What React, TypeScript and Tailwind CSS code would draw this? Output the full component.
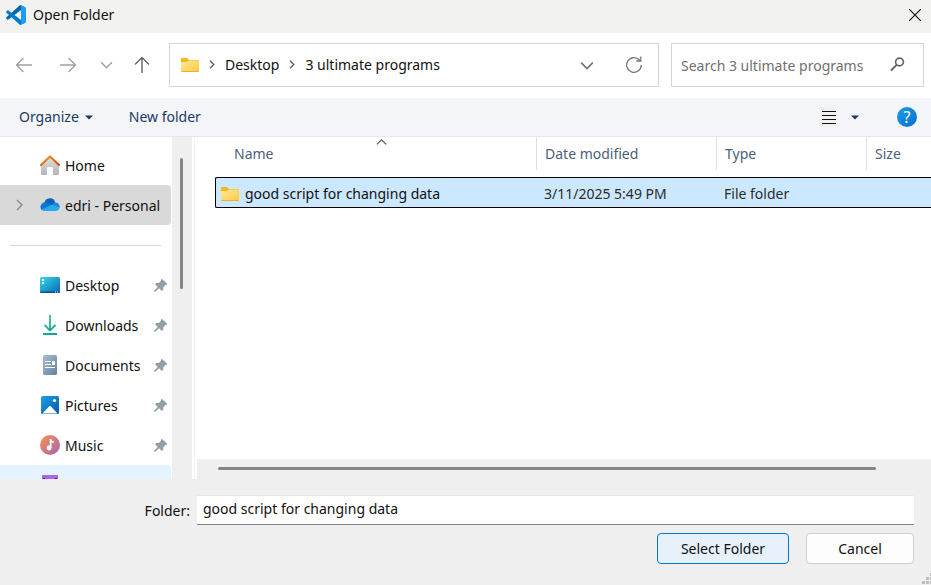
import type { ReactNode } from 'react';

function FolderIcon() {
  return (
    <svg width="18" height="14" viewBox="0 0 18 14" className="shrink-0" aria-hidden="true">
      <defs>
        <linearGradient id="folderFront" x1="0" y1="0" x2="1" y2="1">
          <stop offset="0" stopColor="#ffe9a2" />
          <stop offset="1" stopColor="#ffc83a" />
        </linearGradient>
      </defs>
      <path d="M0 1Q0 0 1 0H6L8 2H17Q18 2 18 3V12H0Z" fill="#f8b61c" />
      <path d="M0 4H6L8 2.5H17.5Q18 2.5 18 3V13Q18 14 17 14H1Q0 14 0 13Z" fill="url(#folderFront)" />
      <path d="M0.5 13.5H17.5" stroke="#eeb02c" strokeWidth="1" />
    </svg>
  );
}

function VsCodeLogo() {
  return (
    <svg width="20" height="20" viewBox="0 0 100 100" aria-hidden="true">
      <path d="M96 11 75 1Q71 -1 68 3L1 63Q-1 65 1 68L7 73Q9 75 12 73L92 12Q100 6 100 18Q100 13 96 11Z" fill="#0065a9" />
      <path d="M96 89 75 99Q71 101 68 97L1 37Q-1 35 1 32L7 27Q9 25 12 27L92 88Q100 94 100 82Q100 87 96 89Z" fill="#007acc" />
      <path d="M75 99Q71 101 68 97Q75 101 75 92V8Q75 -1 68 3Q71 -1 75 1L96 11Q100 13 100 18V82Q100 87 96 89Z" fill="#1f9cf0" />
    </svg>
  );
}

function HomeIcon() {
  return (
    <svg width="20" height="20" viewBox="0 0 20 20" aria-hidden="true">
      <defs>
        <linearGradient id="homeWall" x1="0" y1="0" x2="0" y2="1">
          <stop offset="0" stopColor="#e3e3e3" />
          <stop offset="1" stopColor="#b3b3b3" />
        </linearGradient>
        <linearGradient id="homeRoof" x1="0" y1="0" x2="1" y2="1">
          <stop offset="0" stopColor="#f59a1b" />
          <stop offset="1" stopColor="#d64a10" />
        </linearGradient>
      </defs>
      <path d="M1 9 10 1.5 19 9V18.5Q19 20 17.5 20H13V13Q13 12 12 12H8Q7 12 7 13V20H2.500Q1 20 1 18.500Z" fill="url(#homeWall)" />
      <path d="M1 10 10 1.500 19 10" fill="none" stroke="url(#homeRoof)" strokeWidth="2.200" strokeLinecap="round" strokeLinejoin="round" />
    </svg>
  );
}

function CloudIcon() {
  return (
    <svg width="20" height="14" viewBox="0 0 20 14" aria-hidden="true">
      <path d="M4.500 5A5.500 5.500 0 0 1 15.300 4.500L10 9 4 7Z" fill="#0a63bb" />
      <path d="M5 4A5 5 0 0 0 1.500 12L12 7.500 8 5Q6.500 4 5 4Z" fill="#0b78d4" />
      <path d="M11 7 14 5Q15 4.500 16 4.600A4.300 4.300 0 0 1 19.600 10Z" fill="#168ae0" />
      <path d="M1.500 12 11 7 19.600 10Q18.500 13 15.500 13H5Q2.500 13 1.500 12Z" fill="#29a8ec" />
    </svg>
  );
}

function DesktopIcon() {
  return (
    <svg width="20" height="16" viewBox="0 0 20 16" aria-hidden="true">
      <defs>
        <linearGradient id="desktopFill" x1="0" y1="0" x2="1" y2="1">
          <stop offset="0" stopColor="#36dbe8" />
          <stop offset="1" stopColor="#0b63b8" />
        </linearGradient>
      </defs>
      <rect width="20" height="16" rx="1.500" fill="url(#desktopFill)" />
      <path d="M2 2h2v2H2zM2 5h2v2H2z" fill="#fff" />
      <path d="M0 14.500H20Q20 16 18.500 16H1.500Q0 16 0 14.500Z" fill="#07558f" />
      <path d="M15 15h1M17 15h1" stroke="#fff" strokeWidth="1" />
    </svg>
  );
}

function DownloadIcon() {
  return (
    <svg width="20" height="20" viewBox="0 0 20 20" aria-hidden="true">
      <defs>
        <linearGradient id="downFill" gradientUnits="userSpaceOnUse" x1="4" y1="0" x2="16" y2="20">
          <stop offset="0" stopColor="#35c68a" />
          <stop offset="1" stopColor="#0b9f98" />
        </linearGradient>
      </defs>
      <path d="M10 0V15M4.500 10 10 15.500 15.500 10M3 19H17" fill="none" stroke="url(#downFill)" strokeWidth="1.800" />
    </svg>
  );
}

function DocumentIcon() {
  return (
    <svg width="20" height="20" viewBox="0 0 20 20" aria-hidden="true">
      <defs>
        <linearGradient id="docFill" x1="0" y1="0" x2="1" y2="1">
          <stop offset="0" stopColor="#a9bfd3" />
          <stop offset="1" stopColor="#64809f" />
        </linearGradient>
      </defs>
      <rect x="3" width="14" height="20" rx="1.500" fill="url(#docFill)" />
      <path d="M5 6.500H11M5 9.500H11M5 12.500H15" stroke="#fff" strokeWidth="1.200" />
      <rect x="12" y="6" width="3" height="4" fill="#fff" />
    </svg>
  );
}

function PictureIcon() {
  return (
    <svg width="20" height="18" viewBox="0 0 20 18" aria-hidden="true">
      <defs>
        <linearGradient id="picFill" x1="0" y1="0" x2="1" y2="1">
          <stop offset="0" stopColor="#1fa0e8" />
          <stop offset="1" stopColor="#0558a8" />
        </linearGradient>
      </defs>
      <rect x="1" width="18" height="18" rx="1.500" fill="url(#picFill)" />
      <path d="M2.500 17.500 9 10.500Q10 9.500 11 10.500L17.500 17.500Z" fill="#fff" />
      <circle cx="14.500" cy="4.500" r="1.600" fill="#fff" />
    </svg>
  );
}

function MusicIcon() {
  return (
    <svg width="20" height="20" viewBox="0 0 20 20" aria-hidden="true">
      <defs>
        <linearGradient id="musicFill" x1="0" y1="0" x2="1" y2="1">
          <stop offset="0.100" stopColor="#f28f55" />
          <stop offset="0.950" stopColor="#a965ae" />
        </linearGradient>
      </defs>
      <circle cx="10" cy="10" r="10" fill="url(#musicFill)" />
      <circle cx="9" cy="13" r="2.400" fill="#fff" />
      <path d="M10.600 13V4Q11 7 13.800 7.200" fill="none" stroke="#fff" strokeWidth="1.800" />
    </svg>
  );
}

function VideoIcon() {
  return (
    <svg width="20" height="20" viewBox="0 0 20 20" aria-hidden="true">
      <rect x="2" width="16" height="18" rx="1" fill="#a866ea" />
      <path d="M3 3h2v2H3zM15 3h2v2h-2z" fill="#4b2478" />
    </svg>
  );
}

function PinIcon() {
  return (
    <svg width="13" height="13" viewBox="0 0 13 13" className="shrink-0" aria-hidden="true">
      <path d="M8 0 13 4.500V5.500L11.500 6 9.200 8.600V11L8 12 5 9.300 1.200 12.800 0 12.800V11.800L3.700 8 1 5.200 2 4H4.800L7 1.800V0.500Z" fill="#949ea5" />
    </svg>
  );
}

function Chevron({ dir, size, color, weight }: { dir: 'up' | 'down' | 'right'; size: number; color: string; weight: number }) {
  const d = { up: 'M1 8 6 3 11 8', down: 'M1 4 6 9 11 4', right: 'M4 1 9 6 4 11' }[dir];
  return (
    <svg width={size} height={size} viewBox="0 0 12 12" fill="none" stroke={color} strokeWidth={weight} aria-hidden="true">
      <path d={d} />
    </svg>
  );
}

function Arrow({ d, color }: { d: string; color: string }) {
  return (
    <svg width="16" height="16" viewBox="0 0 16 16" fill="none" stroke={color} strokeWidth="1.400" strokeLinecap="round" strokeLinejoin="round" aria-hidden="true">
      <path d={d} />
    </svg>
  );
}

function Caret() {
  return (
    <svg width="8" height="5" viewBox="0 0 8 5" aria-hidden="true">
      <path d="M0 0.500H8L4 4.500Z" fill="#1b3a63" />
    </svg>
  );
}

function SideItem({ icon, label, pinned, tone = '', chevron }: { icon: ReactNode; label: string; pinned?: boolean; tone?: string; chevron?: boolean }) {
  return (
    <li>
      <button type="button" className={`flex h-10 w-full items-center rounded-r-sm pr-1 pl-3 text-left ${tone}`}>
        <span className="flex w-7 shrink-0 pl-px">{chevron && <Chevron dir="right" size={12} color="#858585" weight={1.3} />}</span>
        <span className="mr-[5px] flex w-5 shrink-0 justify-center">{icon}</span>
        <span className="flex-1 pt-0.5 whitespace-nowrap">{label}</span>
        {pinned && <PinIcon />}
      </button>
    </li>
  );
}

function HeaderCell({ label, last, sorted }: { label: string; last?: boolean; sorted?: boolean }) {
  return (
    <th scope="col" aria-sort={sorted ? 'ascending' : undefined} className="h-10 p-0 text-left align-top font-normal">
      <div className={`relative flex h-[33px] items-center text-[#4c607a] ${sorted ? 'pl-[19px]' : 'pl-2'} ${last ? '' : 'border-r border-[#e2e2e2]'}`}>
        {label}
        {sorted && (
          <span className="absolute top-0 left-[161px]">
            <Chevron dir="up" size={11} color="#555555" weight={1.2} />
          </span>
        )}
      </div>
    </th>
  );
}

export default function App() {
  return (
    <div className="relative flex h-screen flex-col overflow-hidden bg-[#efefef] font-['Noto_Sans','Open_Sans',sans-serif] text-[14px] leading-5 text-[#111111]">
      <header className="flex h-[33px] shrink-0 items-center bg-[#f2f2f1] pr-2.5 pb-1 pl-1.5">
        <VsCodeLogo />
        <h1 className="ml-[7px] flex-1">Open Folder</h1>
        <button type="button" aria-label="Close">
          <svg width="12" height="12" viewBox="0 0 12 12" stroke="#111111" strokeWidth="1.200" aria-hidden="true">
            <path d="M0 0 12 12M12 0 0 12" />
          </svg>
        </button>
      </header>

      <nav aria-label="Location" className="flex h-[65px] shrink-0 items-center bg-white pr-[7px] pb-0.5 pl-4">
        <div className="flex w-[153px] shrink-0 items-center">
          <button type="button" aria-label="Back" className="mr-7"><Arrow d="M15.500 8H0.500M7 1.500 0.500 8 7 14.500" color="#a0a0a0" /></button>
          <button type="button" aria-label="Forward" className="mr-6"><Arrow d="M0.500 8H15.500M9 1.500 15.500 8 9 14.500" color="#a0a0a0" /></button>
          <button type="button" aria-label="Recent locations" className="mr-[21px]"><Chevron dir="down" size={13} color="#a0a0a0" weight={1.4} /></button>
          <button type="button" aria-label="Up"><Arrow d="M8 15.500V0.500M1.500 7 8 0.500 14.500 7" color="#606060" /></button>
        </div>
        <div className="flex h-11 min-w-0 flex-1 items-center border border-[#d5d5d5] pr-4 pl-[11px]">
          <FolderIcon />
          <span className="mr-[9px] ml-2"><Chevron dir="right" size={9} color="#606060" weight={1.8} /></span>
          <button type="button">Desktop</button>
          <span className="mr-[9px] ml-2"><Chevron dir="right" size={9} color="#606060" weight={1.8} /></span>
          <button type="button" className="whitespace-nowrap">3 ultimate programs</button>
          <span className="flex-1" />
          <button type="button" aria-label="Previous locations" className="mr-8"><Chevron dir="down" size={14} color="#707070" weight={1.4} /></button>
          <button type="button" aria-label="Refresh">
            <svg width="16" height="17" viewBox="0 0 16 17" fill="none" stroke="#777777" strokeWidth="1.300" aria-hidden="true">
              <path d="M15.300 9A7.300 7.300 0 1 1 13.500 4.200M14.800 0.500V5H10.300" />
            </svg>
          </button>
        </div>
        <div className="ml-3 flex h-11 w-[253px] shrink-0 items-center border border-[#d5d5d5] pr-[18px] pl-[9px]">
          <input type="search" aria-label="Search 3 ultimate programs" placeholder="Search 3 ultimate programs" className="min-w-0 flex-1 pt-0.5 outline-none placeholder:text-[#707070]" />
          <svg width="15" height="15" viewBox="0 0 15 15" fill="none" stroke="#666666" aria-hidden="true">
            <circle cx="9.500" cy="5" r="3.900" strokeWidth="1.700" />
            <path d="M6.600 7.900 1 13.500" strokeWidth="2" />
          </svg>
        </div>
      </nav>

      <div role="toolbar" aria-label="Commands" className="flex h-[39px] shrink-0 items-center border-b border-[#e5e7ea] bg-[#f4f5f8] pr-3.5 pl-[19px] text-[#1b3a63]">
        <button type="button" className="mr-9 flex items-center gap-1.5">Organize<Caret /></button>
        <button type="button">New folder</button>
        <span className="flex-1" />
        <button type="button" aria-label="Change view" className="flex h-5 w-5 items-center justify-center bg-[#f1f1f1]">
          <svg width="14" height="13" viewBox="0 0 14 13" stroke="#111111" aria-hidden="true">
            <path d="M0 0.500H14M0 4.500H14M0 8.500H14M0 12.500H14" />
          </svg>
        </button>
        <button type="button" aria-label="More view options" className="mr-[38px] ml-3"><Caret /></button>
        <button type="button" aria-label="Help" className="flex h-5 w-5 items-center justify-center rounded-full bg-linear-to-br from-[#1c9be6] to-[#0a6fd0] text-[16px] text-white">?</button>
      </div>

      <main className="flex min-h-0 flex-1 bg-white">
        <aside className="flex w-48 shrink-0 overflow-hidden">
          <ul className="min-w-0 flex-1 pt-2 pr-px">
            <SideItem icon={<HomeIcon />} label="Home" />
            <SideItem icon={<CloudIcon />} label="edri - Personal" tone="bg-[#d9d9d9]" chevron />
            <li role="separator" className="mr-2.5 ml-2.5 flex h-10 items-center"><span className="h-px w-full bg-[#d5d5d5]" /></li>
            <SideItem icon={<DesktopIcon />} label="Desktop" pinned />
            <SideItem icon={<DownloadIcon />} label="Downloads" pinned />
            <SideItem icon={<DocumentIcon />} label="Documents" pinned />
            <SideItem icon={<PictureIcon />} label="Pictures" pinned />
            <SideItem icon={<MusicIcon />} label="Music" pinned />
            <SideItem icon={<VideoIcon />} label="" tone="bg-[#e5f3ff]" />
          </ul>
          <div className="w-5 shrink-0 bg-[#efefef] pt-[21px] pl-2">
            <div className="h-[131px] w-[3px] rounded-full bg-[#858585]" />
          </div>
        </aside>
        <section aria-label="Files" className="ml-0.5 flex min-w-0 flex-1 flex-col border-l border-[#f2f2f2] pl-0.5">
          <div className="min-h-0 flex-1 overflow-hidden pl-[18px]">
            <table className="w-full table-fixed border-separate border-spacing-0">
              <colgroup>
                <col />
                <col className="w-[180px]" />
                <col className="w-[150px]" />
                <col className="w-16" />
              </colgroup>
              <thead>
                <tr>
                  <HeaderCell label="Name" sorted />
                  <HeaderCell label="Date modified" />
                  <HeaderCell label="Type" />
                  <HeaderCell label="Size" last />
                </tr>
              </thead>
              <tbody>
                <tr className="bg-[#cce8ff] text-[#2b2b2b]">
                  <td className="h-[31px] rounded-l-xs border-y border-l border-black px-0 pt-0.5 pb-0 pl-[5px] text-[#111111]">
                    <div className="flex items-center gap-1.5"><FolderIcon />good script for changing data</div>
                  </td>
                  <td className="border-y border-black pt-0.5 pr-0 pb-0 pl-[7px]">3/11/2025 5:49 PM</td>
                  <td className="border-y border-black pt-0.5 pr-0 pb-0 pl-[7px]">File folder</td>
                  <td className="border-y border-black p-0" />
                </tr>
              </tbody>
            </table>
          </div>
          <div className="flex h-5 shrink-0 items-center bg-[#efefef] pr-[55px] pb-px pl-[21px]">
            <div className="h-[3px] flex-1 rounded-full bg-[#858585]" />
          </div>
        </section>
      </main>

      <footer className="flex h-[106px] shrink-0">
        <form className="flex flex-1 flex-col gap-2 pt-4 pr-[17px]" onSubmit={(event) => event.preventDefault()}>
          <div className="flex items-center">
            <label htmlFor="folder" className="w-[197px] shrink-0 pt-0.5 pr-[7px] text-right">Folder:</label>
            <input id="folder" type="text" defaultValue="good script for changing data" className="h-[30px] min-w-0 flex-1 border-t border-b border-t-[#e8e8e8] border-b-[#858585] bg-white px-1.5 pb-1 outline-none" />
          </div>
          <div className="flex justify-end gap-[17px]">
            <button type="submit" className="h-[31px] w-[132px] rounded-sm border border-[#0078d4] bg-[#e6f1fb]">Select Folder</button>
            <button type="button" className="h-[31px] w-[108px] rounded-sm border border-[#d0d0d0] bg-[#fdfdfd]">Cancel</button>
          </div>
        </form>
        <svg width="9" height="12" viewBox="0 0 9 12" className="absolute right-0 bottom-0" fill="#bcbcbc" aria-hidden="true">
          <path d="M0 8h3v3H0zM4 8h3v3H4zM8 8h1v3H8zM4 4h3v3H4zM8 4h1v3H8zM8 0h1v3H8z" />
        </svg>
      </footer>
    </div>
  );
}
